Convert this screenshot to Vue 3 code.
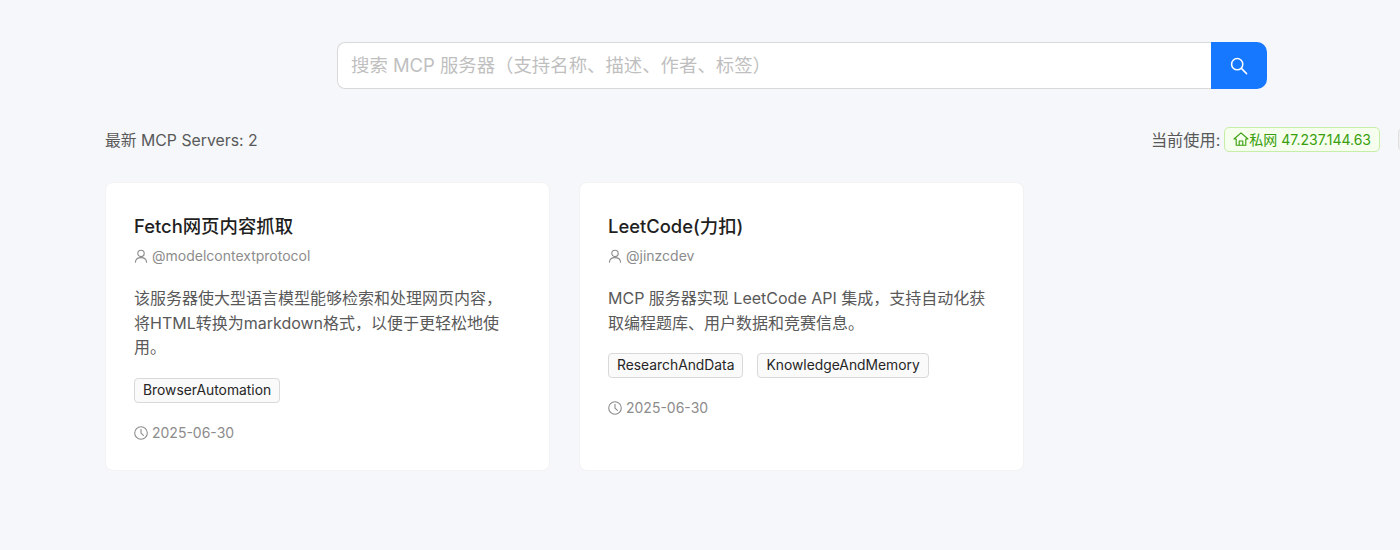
<template>
  <div class="page">
    <div class="wrap">
      <div class="search">
        <input class="search-input" type="text" placeholder="搜索 MCP 服务器（支持名称、描述、作者、标签）">
        <button class="search-btn" aria-label="搜索">
          <svg width="18" height="18" viewBox="0 0 18 18" fill="none" stroke="#fff" stroke-width="1.5" stroke-linecap="round">
            <circle cx="7.2" cy="7.2" r="5.6" />
            <path d="M11.4 11.4 16.6 16.6" />
          </svg>
        </button>
      </div>

      <div class="toolbar">
        <span class="count">最新 MCP Servers: {{ servers.length }}</span>
        <div class="current">
          <span class="current-label">当前使用:</span>
          <span class="net-tag">
            <svg width="16" height="16" viewBox="0 0 16 16" fill="none" stroke="#389e0d" stroke-width="1.1" stroke-linejoin="round">
              <path d="M1 8 8 1.8 15 8H12.8V14.2H3.2V8Z" />
              <path d="M6.2 14.2V10H9.8V14.2" />
            </svg>
            <span>私网 47.237.144.63</span>
          </span>
          <button class="switch-btn"></button>
        </div>
      </div>

      <div class="grid">
        <div v-for="s in servers" :key="s.name" class="card">
          <h3 class="title">{{ s.name }}</h3>
          <div class="meta author">
            <svg width="14" height="14" viewBox="0 0 14 14" fill="none" stroke="#8c8c8c" stroke-width="1.1" stroke-linecap="round">
              <circle cx="7" cy="4.4" r="3.2" />
              <path d="M1.4 13.2C1.6 10.2 4 8.6 7 8.6S12.4 10.2 12.6 13.2" />
            </svg>
            <span>{{ s.author }}</span>
          </div>
          <p class="desc">{{ s.desc }}</p>
          <div class="tags">
            <span v-for="t in s.tags" :key="t" class="tag">{{ t }}</span>
          </div>
          <div class="meta date">
            <svg width="14" height="14" viewBox="0 0 14 14" fill="none" stroke="#8c8c8c" stroke-width="1.1" stroke-linecap="round" stroke-linejoin="round">
              <circle cx="7" cy="7" r="6.3" />
              <path d="M7 3.2V7.2L9.4 9.4" />
            </svg>
            <span>{{ s.date }}</span>
          </div>
        </div>
      </div>
    </div>
  </div>
</template>

<script setup>
const servers = [
  {
    name: 'Fetch网页内容抓取',
    author: '@modelcontextprotocol',
    desc: '该服务器使大型语言模型能够检索和处理网页内容，将HTML转换为markdown格式，以便于更轻松地使用。',
    tags: ['BrowserAutomation'],
    date: '2025-06-30'
  },
  {
    name: 'LeetCode(力扣)',
    author: '@jinzcdev',
    desc: 'MCP 服务器实现 LeetCode API 集成，支持自动化获取编程题库、用户数据和竞赛信息。',
    tags: ['ResearchAndData', 'KnowledgeAndMemory'],
    date: '2025-06-30'
  }
]
</script>

<style>
html,
body {
  margin: 0;
  overflow: hidden;
  background: #f5f7fa;
}
</style>

<style scoped>
.page {
  width: 1400px;
  height: 550px;
  overflow: hidden;
  background: #f5f7fa;
  font-family: Inter, "Noto Sans CJK SC", sans-serif;
  color: #595959;
}

/* the content column is wider than the window and gets cut off on the right */
.wrap {
  width: 1394px;
  margin-left: 105px;
  padding-top: 42px;
}

.search {
  display: flex;
  width: 930px;
  height: 47px;
  margin: 0 auto;
}

.search-input {
  flex: 1;
  min-width: 0;
  box-sizing: border-box;
  height: 47px;
  padding: 0 13px 2px;
  border: 1px solid #d9d9d9;
  border-right: 0;
  border-radius: 8px 0 0 8px;
  background: #fff;
  outline: none;
  font-family: inherit;
  font-size: 18.4px;
  color: #262626;
}

.search-input::placeholder {
  color: #bfbfbf;
}

.search-btn {
  display: flex;
  align-items: center;
  justify-content: center;
  width: 56px;
  height: 47px;
  padding: 0;
  border: 0;
  border-radius: 0 10px 10px 0;
  background: #1677ff;
}

.toolbar {
  display: flex;
  align-items: center;
  justify-content: space-between;
  height: 26px;
  margin-top: 37px;
}

.count {
  font-size: 15.8px;
}

.current {
  display: flex;
  align-items: center;
}

.current-label {
  margin-right: 4px;
  font-size: 16.2px;
}

.net-tag {
  display: inline-flex;
  align-items: center;
  box-sizing: border-box;
  height: 25px;
  padding: 0 8px;
  border: 1px solid #c6eea8;
  border-radius: 5px;
  background: #f6ffed;
  color: #389e0d;
  font-size: 14px;
}

.switch-btn {
  width: 101px;
  height: 25px;
  margin-left: 18px;
  border: 1px solid #e0e0e0;
  border-radius: 6px;
  background: #f0f0f0;
}

.grid {
  display: grid;
  grid-template-columns: repeat(3, 445px);
  gap: 29px;
  margin-top: 30px;
}

.card {
  box-sizing: border-box;
  height: 289px;
  padding: 29px 28px 28px;
  border: 1px solid #f3f3f3;
  border-radius: 8px;
  background: #fff;
}

.title {
  margin: 0;
  height: 29px;
  font-size: 18.4px;
  line-height: 29px;
  font-weight: 500;
  color: #1f1f1f;
}

.meta {
  display: flex;
  align-items: center;
  gap: 4px;
  font-size: 14px;
  line-height: 22px;
  color: #8c8c8c;
}

.author {
  margin-top: 4px;
}

.desc {
  margin: 19px 0 0;
  padding-right: 6px;
  font-size: 16px;
  line-height: 24.6px;
  color: #595959;
}

.tags {
  display: flex;
  gap: 14px;
  margin-top: 18px;
}

.tag {
  box-sizing: border-box;
  height: 25px;
  padding: 0 8px;
  border: 1px solid #d9d9d9;
  border-radius: 4px;
  background: #fafafa;
  font-size: 13.85px;
  line-height: 23px;
  color: #262626;
}

.date {
  margin-top: 19px;
}
</style>
